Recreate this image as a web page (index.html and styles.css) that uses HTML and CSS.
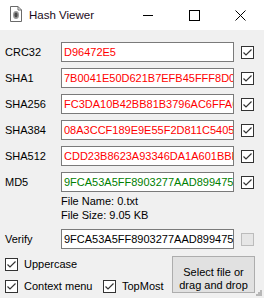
FILE: index.html
```html
<!DOCTYPE html>
<html lang="en">
<head>
    <meta charset="UTF-8">
    <meta name="viewport" content="width=device-width, initial-scale=1.0">
    <title>Hash Viewer</title>
    <link rel="stylesheet" href="styles.css">
</head>
<body>

    <div class="window">
        <!-- Title bar -->
        <div class="title-bar">
            <svg class="app-icon" width="12" height="16" viewBox="0 0 12 16">
                <path d="M0.5 0.5 H8 L11.5 4 V15.5 H0.5 Z" fill="#fff" stroke="#6a6a6a"/>
                <path d="M8 0.5 V4 H11.5" fill="none" stroke="#6a6a6a"/>
                <ellipse cx="6" cy="9" rx="3" ry="4" fill="#9a9a9a"/>
                <ellipse cx="6" cy="9" rx="1.6" ry="2.4" fill="#4a4a4a"/>
            </svg>
            <span class="title">Hash Viewer</span>
            <div class="caption-buttons">
                <div class="caption-btn">
                    <svg width="10" height="10" viewBox="0 0 10 10"><path d="M0 5.5 H10" stroke="#000"/></svg>
                </div>
                <div class="caption-btn">
                    <svg width="11" height="11" viewBox="0 0 11 11"><rect x="0.5" y="0.5" width="10" height="10" fill="none" stroke="#000"/></svg>
                </div>
                <div class="caption-btn">
                    <svg width="11" height="11" viewBox="0 0 11 11"><path d="M0.5 0.5 L10.5 10.5 M10.5 0.5 L0.5 10.5" stroke="#000"/></svg>
                </div>
            </div>
        </div>

        <!-- Hash rows -->
        <div class="hash-grid">
            <label>CRC32</label>
            <input class="hash red" type="text" value="D96472E5" readonly>
            <span class="check checked"></span>

            <label>SHA1</label>
            <input class="hash red" type="text" value="7B0041E50D621B7EFB45FFF8D09C2A4E1B77F0D3" readonly>
            <span class="check checked"></span>

            <label>SHA256</label>
            <input class="hash red" type="text" value="FC3DA10B42BB81B3796AC6FFA67E2D0C41A8B9F3E2D7C6A5B4E3F2A1D0C9B8A7" readonly>
            <span class="check checked"></span>

            <label>SHA384</label>
            <input class="hash red" type="text" value="08A3CCF189E9E55F2D811C54059AB0D2E7F1C3A94B6D8E02F5C7A1B3D9E4F60A" readonly>
            <span class="check checked"></span>

            <label>SHA512</label>
            <input class="hash red" type="text" value="CDD23B8623A93346DA1A601BBF2E4C8D07A5B1F9E3C6D2A8B4F0E7C1D5A9B3F6" readonly>
            <span class="check checked"></span>

            <label>MD5</label>
            <input class="hash green" type="text" value="9FCA53A5FF8903277AAD89947502C1E4" readonly>
            <span class="check checked"></span>
        </div>

        <div class="file-info">
            <div>File Name: 0.txt</div>
            <div>File Size: 9.05 KB</div>
        </div>

        <div class="hash-grid verify-row">
            <label>Verify</label>
            <input class="hash" type="text" value="9FCA53A5FF8903277AAD89947502C1E4" readonly>
            <span class="check disabled"></span>
        </div>

        <!-- Options and file button -->
        <div class="bottom">
            <div class="options">
                <div class="opt-row">
                    <label class="opt"><span class="check checked"></span>Uppercase</label>
                </div>
                <div class="opt-row">
                    <label class="opt context"><span class="check checked"></span>Context menu</label>
                    <label class="opt"><span class="check checked"></span>TopMost</label>
                </div>
            </div>
            <button class="select-btn">Select file or<br>drag and drop</button>
        </div>

        <svg class="grip" width="6" height="6" viewBox="0 0 6 6">
            <rect x="4" y="0" width="2" height="2" fill="#b8b8b8"/>
            <rect x="2" y="2" width="2" height="2" fill="#b8b8b8"/>
            <rect x="4" y="2" width="2" height="2" fill="#b8b8b8"/>
            <rect x="0" y="4" width="2" height="2" fill="#b8b8b8"/>
            <rect x="2" y="4" width="2" height="2" fill="#b8b8b8"/>
            <rect x="4" y="4" width="2" height="2" fill="#b8b8b8"/>
        </svg>
    </div>

</body>
</html>
```

FILE: styles.css
```css
body {
    margin: 0;
    font-family: "Liberation Sans", Arial, sans-serif;
    font-size: 11px;
    color: #000;
}

.window {
    position: relative;
    width: 264px;
    height: 298px;
    background: #f0f0f0;
    overflow: hidden;
}

/* Title bar */
.title-bar {
    display: flex;
    align-items: center;
    height: 30px;
    background: #fff;
}

.app-icon {
    margin-left: 10px;
    margin-top: -2px;
}

.title {
    margin-left: 7px;
    font-size: 11.5px;
    color: #1a0a1a;
}

.caption-buttons {
    display: flex;
    margin-left: auto;
    margin-right: 1px;
    height: 30px;
}

.caption-btn {
    width: 46px;
    display: flex;
    align-items: center;
    justify-content: center;
}

/* Hash rows */
.hash-grid {
    display: grid;
    grid-template-columns: 49px 173px 13px;
    grid-auto-rows: 20px;
    column-gap: 7px;
    row-gap: 6px;
    align-items: center;
    padding: 12px 0 0 5px;
}

.hash-grid label {
    line-height: 14px;
}

input.hash {
    box-sizing: border-box;
    width: 173px;
    height: 20px;
    margin: 0;
    padding: 0 0 0 2px;
    border: 1px solid #7a7a7a;
    background: #fff;
    font-family: "Liberation Sans", Arial, sans-serif;
    font-size: 11px;
    color: #000;
    outline: none;
}

input.red {
    color: #ff0000;
}

input.green {
    color: #008000;
}

.check {
    box-sizing: border-box;
    display: inline-block;
    width: 13px;
    height: 13px;
    border: 1px solid #333;
    background: #fff;
}

.check.checked {
    background: #fff url("data:image/svg+xml,%3Csvg xmlns='http://www.w3.org/2000/svg' width='11' height='11' viewBox='0 0 11 11'%3E%3Cpath d='M1.5 5.5 L4 8 L9.5 2.5' fill='none' stroke='%23333' stroke-width='1.2'/%3E%3C/svg%3E") no-repeat center;
}

.check.disabled {
    border-color: #bcbcbc;
    background: #e6e6e6;
}

.file-info {
    margin: 2px 0 0 61px;
    line-height: 14px;
}

.verify-row {
    padding-top: 7px;
}

/* Bottom area */
.bottom {
    display: flex;
    margin-top: 7px;
    padding-left: 5px;
}

.options {
    display: flex;
    flex-direction: column;
    gap: 9px;
    width: 167px;
    padding-top: 2px;
}

.opt-row {
    display: flex;
    height: 13px;
}

.opt {
    display: flex;
    align-items: center;
    gap: 6px;
    line-height: 13px;
}

.opt.context {
    width: 98px;
}

.select-btn {
    box-sizing: border-box;
    width: 83px;
    height: 37px;
    padding: 8px 0 0;
    border: 1px solid #adadad;
    background: #e1e1e1;
    font-family: "Liberation Sans", Arial, sans-serif;
    font-size: 11px;
    line-height: 12.5px;
    color: #000;
    text-align: center;
    vertical-align: top;
    display: block;
}

.grip {
    position: absolute;
    right: 2px;
    bottom: 2px;
}
```
